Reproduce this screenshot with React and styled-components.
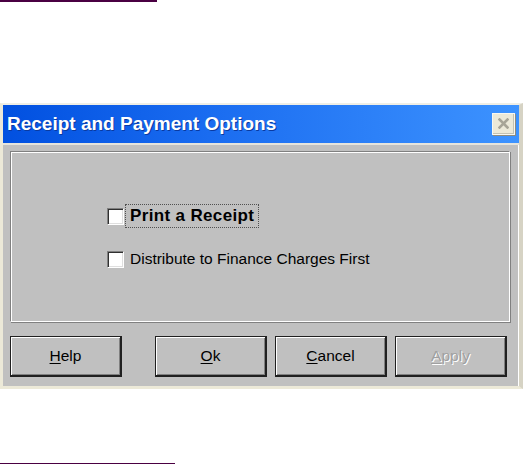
import React from "react";
import styled, { createGlobalStyle } from "styled-components";

const Global = createGlobalStyle`
  html, body { margin: 0; padding: 0; background: #ffffff; }
  body { width: 523px; height: 464px; overflow: hidden; font-family: "Liberation Sans", Arial, sans-serif; }
`;

const Page = styled.div`
  display: flex;
  flex-direction: column;
  width: 523px;
  height: 464px;
`;

const Rule = styled.div`
  width: ${(p) => p.$w}px;
  height: 2px;
  background: #4a0042;
  margin-top: ${(p) => p.$top}px;
`;

const Dialog = styled.div`
  margin-top: 101px;
  width: 523px;
  box-sizing: border-box;
  border-top: 2px solid #efeee6;
  border-left: 3px solid #ece9d8;
  border-right: 4px solid #d6d3c4;
  border-bottom: 3px solid #ece9d8;
  box-shadow: inset -1px 0 0 #ffffff;
  background: #c0c0c0;
  display: flex;
  flex-direction: column;
`;

const TitleBar = styled.div`
  height: 38px;
  background: linear-gradient(to right, #0150e0 0%, #1a6cf0 40%, #3d93ff 100%);
  display: flex;
  align-items: center;
  justify-content: space-between;
  padding: 0 4px 0 4px;
  border-bottom: 2px solid #e6e4dc;
`;

const Title = styled.span`
  color: #ffffff;
  font-family: "Liberation Sans", Arial, sans-serif;
  font-weight: bold;
  font-size: 19px;
  text-shadow: 1px 1px 0 #0a3aa0;
`;

const CloseBtn = styled.div`
  width: 23px;
  height: 22px;
  box-sizing: border-box;
  background: #ece9d8;
  border: 1px solid #f8f7f0;
  box-shadow: 1px 1px 0 #8d8b7e, inset -1px -1px 0 #c5c2b2;
  display: flex;
  align-items: center;
  justify-content: center;
`;

const Body = styled.div`
  display: flex;
  flex-direction: column;
  padding: 6px 7px 9px 7px;
`;

const Panel = styled.div`
  height: 171px;
  box-sizing: border-box;
  border-top: 1px solid #808080;
  border-left: 1px solid #808080;
  border-right: 1px solid #ffffff;
  border-bottom: 1px solid #ffffff;
  box-shadow: inset 1px 1px 0 #ffffff, 1px 1px 0 #808080;
  margin-right: 2px;
  display: flex;
  flex-direction: column;
  gap: 24px;
  padding: 55px 0 0 96px;
`;

const Row = styled.label`
  display: flex;
  align-items: center;
  gap: 2px;
  height: 19px;
`;

const Box = styled.span`
  width: 17px;
  height: 17px;
  box-sizing: border-box;
  background: #ffffff;
  border-top: 1px solid #808080;
  border-left: 1px solid #808080;
  border-right: 1px solid #ffffff;
  border-bottom: 1px solid #ffffff;
  box-shadow: inset 1px 1px 0 #303030, inset -1px -1px 0 #dfdfdf;
`;

const Label = styled.span`
  font-family: "Liberation Sans", Arial, sans-serif;
  font-size: ${(p) => (p.$bold ? "17px" : "15.5px")};
  letter-spacing: ${(p) => (p.$bold ? "0.35px" : "0")};
  font-weight: ${(p) => (p.$bold ? "bold" : "normal")};
  color: #000000;
  padding: 1px 4px;
  outline: ${(p) => (p.$focus ? "1px dotted #505050" : "none")};
`;

const Buttons = styled.div`
  display: flex;
  margin-top: 14px;
`;

const Button = styled.div`
  width: 112px;
  height: 41px;
  box-sizing: border-box;
  margin-left: ${(p) => p.$gap || 0}px;
  border: 1px solid #202020;
  border-bottom-width: 2px;
  border-right-width: 2px;
  box-shadow: inset 1px 1px 0 #ffffff, inset -1px -1px 0 #808080;
  background: #c0c0c0;
  display: flex;
  align-items: center;
  justify-content: center;
  font-family: "Liberation Sans", Arial, sans-serif;
  font-size: 15.5px;
  color: ${(p) => (p.$disabled ? "#a0a0a0" : "#000000")};
  text-shadow: ${(p) => (p.$disabled ? "1px 1px 0 #ffffff" : "none")};
  u { text-decoration: underline; text-underline-offset: 2px; }
`;

export default function App() {
  return (
    <Page>
      <Global />
      <Rule $w={157} $top={0} />
      <Dialog>
        <TitleBar>
          <Title>Receipt and Payment Options</Title>
          <CloseBtn>
            <svg width="11" height="11" viewBox="0 0 11 11">
              <path d="M1.5 1.5 L9.5 9.5 M9.5 1.5 L1.5 9.5" stroke="#a8a597" strokeWidth="2.6" strokeLinecap="square" />
            </svg>
          </CloseBtn>
        </TitleBar>
        <Body>
          <Panel>
            <Row>
              <Box />
              <Label $bold $focus>Print a Receipt</Label>
            </Row>
            <Row>
              <Box />
              <Label>Distribute to Finance Charges First</Label>
            </Row>
          </Panel>
          <Buttons>
            <Button><span><u>H</u>elp</span></Button>
            <Button $gap={33}><span><u>O</u>k</span></Button>
            <Button $gap={8}><span><u>C</u>ancel</span></Button>
            <Button $gap={8} $disabled><span><u>A</u>pply</span></Button>
          </Buttons>
        </Body>
      </Dialog>
      <Rule $w={175} $top={74} />
    </Page>
  );
}
